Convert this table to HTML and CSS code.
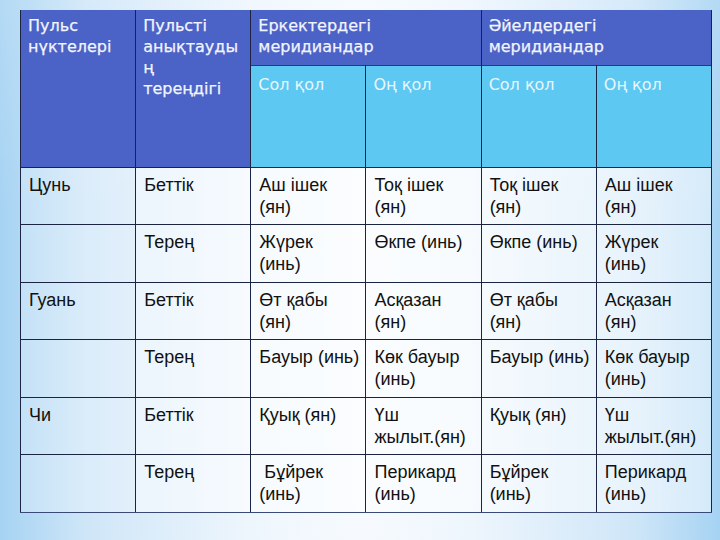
FILE: index.html
```html
<!DOCTYPE html>
<html lang="kk">
<head>
<meta charset="utf-8">
<title>Пульс нүктелері</title>
<link rel="stylesheet" href="styles.css">
</head>
<body>
<table class="pulse">
  <colgroup>
    <col><col><col><col><col><col>
  </colgroup>
  <thead>
    <tr class="h1">
      <th rowspan="2" class="dark">Пульс<br>нүктелері</th>
      <th rowspan="2" class="dark">Пульстi<br>анықтауды<br>ң<br>тереңдігі</th>
      <th colspan="2" class="dark">Еркектердегі<br>меридиандар</th>
      <th colspan="2" class="dark">Әйелдердегі<br>меридиандар</th>
    </tr>
    <tr class="h2">
      <th class="light">Сол қол</th>
      <th class="light">Оң қол</th>
      <th class="light">Сол қол</th>
      <th class="light">Оң қол</th>
    </tr>
  </thead>
  <tbody>
    <tr>
      <td class="first">Цунь</td><td>Беттік</td>
      <td>Аш ішек<br>(ян)</td><td>Тоқ ішек<br>(ян)</td><td>Тоқ ішек<br>(ян)</td><td>Аш ішек<br>(ян)</td>
    </tr>
    <tr>
      <td class="first"></td><td>Терең</td>
      <td>Жүрек<br>(инь)</td><td>Өкпе (инь)</td><td>Өкпе (инь)</td><td>Жүрек<br>(инь)</td>
    </tr>
    <tr>
      <td class="first">Гуань</td><td>Беттік</td>
      <td>Өт қабы<br>(ян)</td><td>Асқазан<br>(ян)</td><td>Өт қабы<br>(ян)</td><td>Асқазан<br>(ян)</td>
    </tr>
    <tr>
      <td class="first"></td><td>Терең</td>
      <td>Бауыр (инь)</td><td>Көк бауыр<br>(инь)</td><td>Бауыр (инь)</td><td>Көк бауыр<br>(инь)</td>
    </tr>
    <tr>
      <td class="first">Чи</td><td>Беттік</td>
      <td>Қуық (ян)</td><td>Үш<br>жылыт.(ян)</td><td>Қуық (ян)</td><td>Үш<br>жылыт.(ян)</td>
    </tr>
    <tr>
      <td class="first"></td><td>Терең</td>
      <td>&nbsp;Бұйрек<br>(инь)</td><td>Перикард<br>(инь)</td><td>Бұйрек<br>(инь)</td><td>Перикард<br>(инь)</td>
    </tr>
  </tbody>
</table>
</body>
</html>
```
FILE: styles.css
```css
html, body {
  margin: 0;
  padding: 0;
}
body {
  width: 720px;
  height: 540px;
  overflow: hidden;
  padding: 10px 0 0 20px;
  box-sizing: border-box;
  background:
    linear-gradient(to bottom, rgba(255,255,255,0.15) 0%, rgba(255,255,255,0) 40%, rgba(255,255,255,0) 100%),
    linear-gradient(to right, #a6d3f3 0%, #cfe6f8 12%, #eef6fd 35%, #f6fafe 50%, #eef6fd 65%, #cfe6f8 88%, #a6d3f3 100%);
  font-family: "Liberation Sans", Arial, sans-serif;
}
.pulse {
  border-collapse: collapse;
  table-layout: fixed;
  width: 692px;
}
.pulse col {
  width: 115px;
}
.pulse th {
  font-family: "DejaVu Sans", Verdana, sans-serif;
  font-weight: normal;
  font-size: 16px;
  line-height: 21px;
  text-align: left;
  vertical-align: top;
  padding: 5px 2px 0 7px;
  border-left: 1px solid #1b2440;
  border-right: 1px solid #1b2440;
}
.pulse th.dark {
  background: #4b62c6;
  color: #f2f5ff;
  -webkit-text-stroke: 0.25px #f2f5ff;
}
.pulse th.light {
  background: #5dc8f1;
  color: #e9f6fd;
  padding-top: 8px;
  border-top: 1px solid #2a3a70;
}
.h1 {
  height: 55px;
}
.h2 {
  height: 102px;
}
.pulse td {
  font-size: 18px;
  line-height: 22px;
  color: #111;
  vertical-align: top;
  padding: 6px 3px 0 8px;
  height: 50.6px;
  border: 1px solid #1b2440;
  background: rgba(255,255,255,0.5);
}
.pulse td.first {
  background: rgba(255,255,255,0.25);
}
.pulse tbody tr:last-child td {
  border-bottom: 1px solid #3a4a78;
}
```
